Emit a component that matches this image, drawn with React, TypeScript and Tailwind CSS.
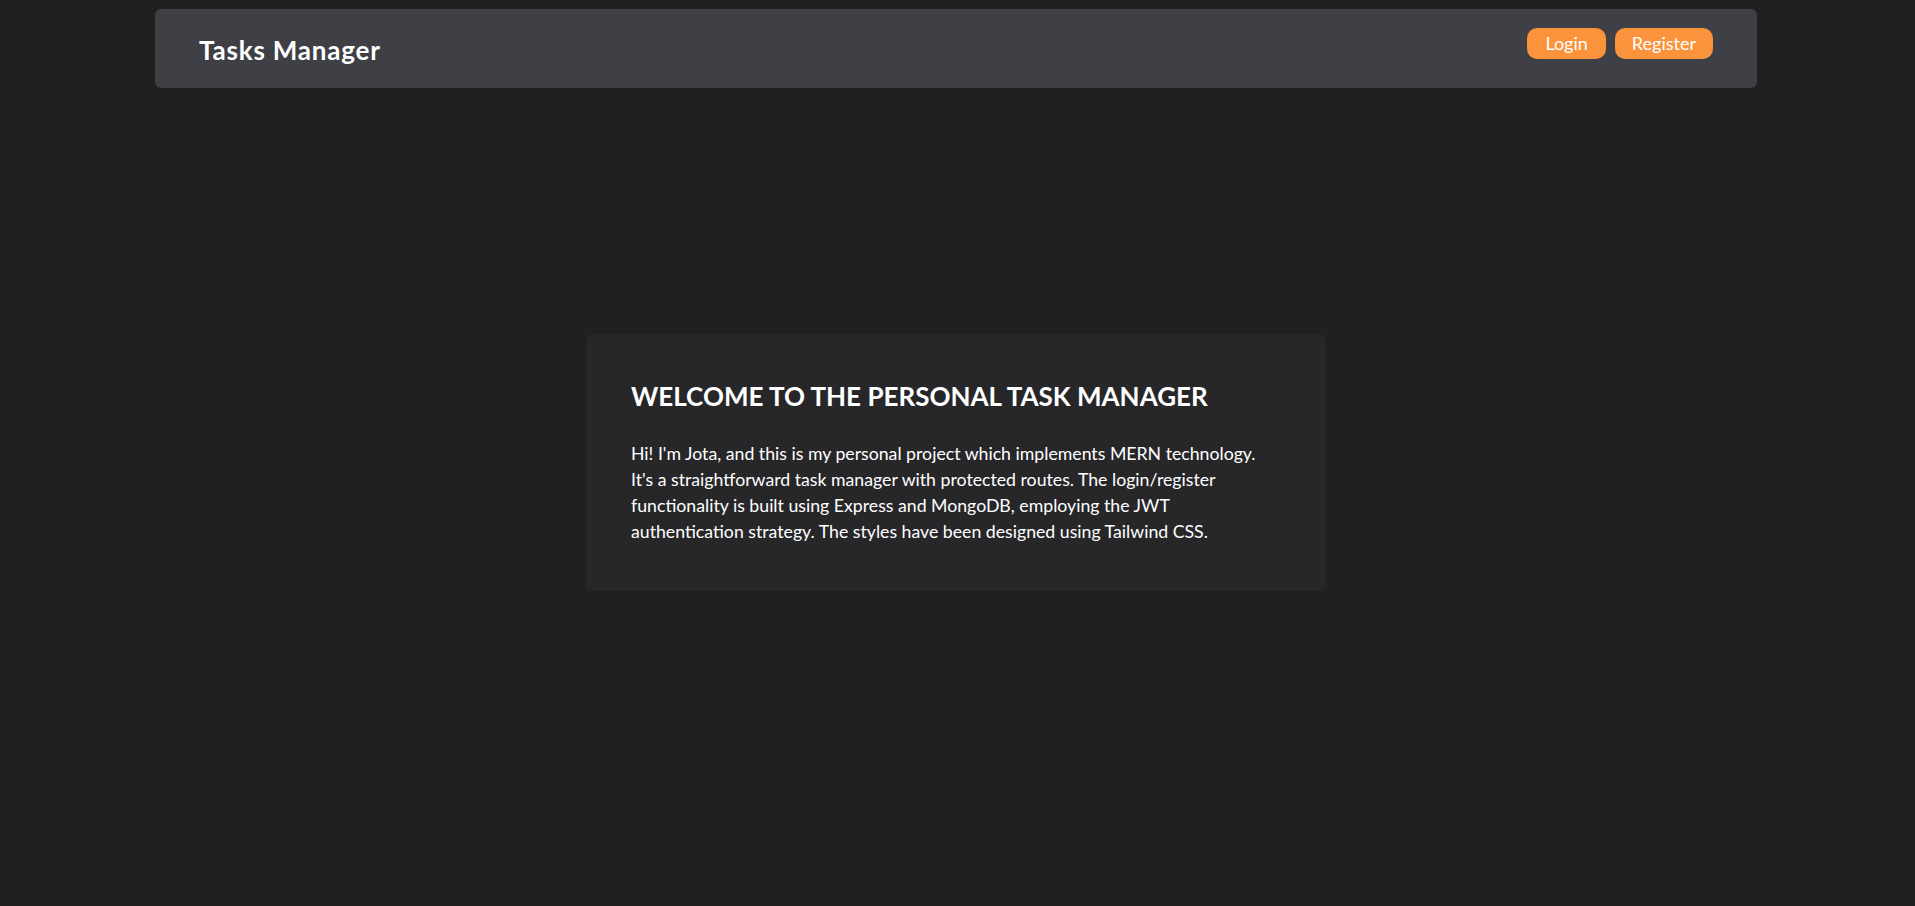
import React from "react";

const font = { fontFamily: '"Segoe UI", Lato, "Noto Sans", sans-serif' };

function Navbar() {
  return (
    <nav className="ml-[155px] flex h-[79px] w-[1602px] items-start justify-between rounded-md bg-[#3f3f46] px-[44px]">
      <h1 className="mt-[25px] text-[26px] font-bold leading-[32px] tracking-[0.8px] text-white">
        Tasks Manager
      </h1>
      <ul className="mt-[19px] flex gap-[9px]">
        <li>
          <button className="h-[31px] rounded-[10px] bg-[#fb923c] px-[18px] text-[18px] leading-[31px] text-white">
            Login
          </button>
        </li>
        <li>
          <button className="h-[31px] rounded-[10px] bg-[#fb923c] px-[17px] text-[18px] leading-[31px] text-white">
            Register
          </button>
        </li>
      </ul>
    </nav>
  );
}

export default function App() {
  return (
    <div className="min-h-screen bg-[#202020] pt-[9px]" style={font}>
      <Navbar />
      <main className="flex justify-center pr-[3px] pt-[246px]">
        <div className="w-[740px] rounded-md bg-[#27272a] px-[45px] pb-[46px] pt-[46px]">
          <h2 className="text-[26px] font-bold leading-[32px] text-white">
            WELCOME TO THE PERSONAL TASK MANAGER
          </h2>
          <p className="mt-[29px] text-[17.7px] leading-[26px] text-white">
            Hi! I'm Jota, and this is my personal project which implements MERN
            technology. It's a straightforward task manager with protected
            routes. The login/register functionality is built using Express and
            MongoDB, employing the JWT authentication strategy. The styles have
            been designed using Tailwind CSS.
          </p>
        </div>
      </main>
    </div>
  );
}
